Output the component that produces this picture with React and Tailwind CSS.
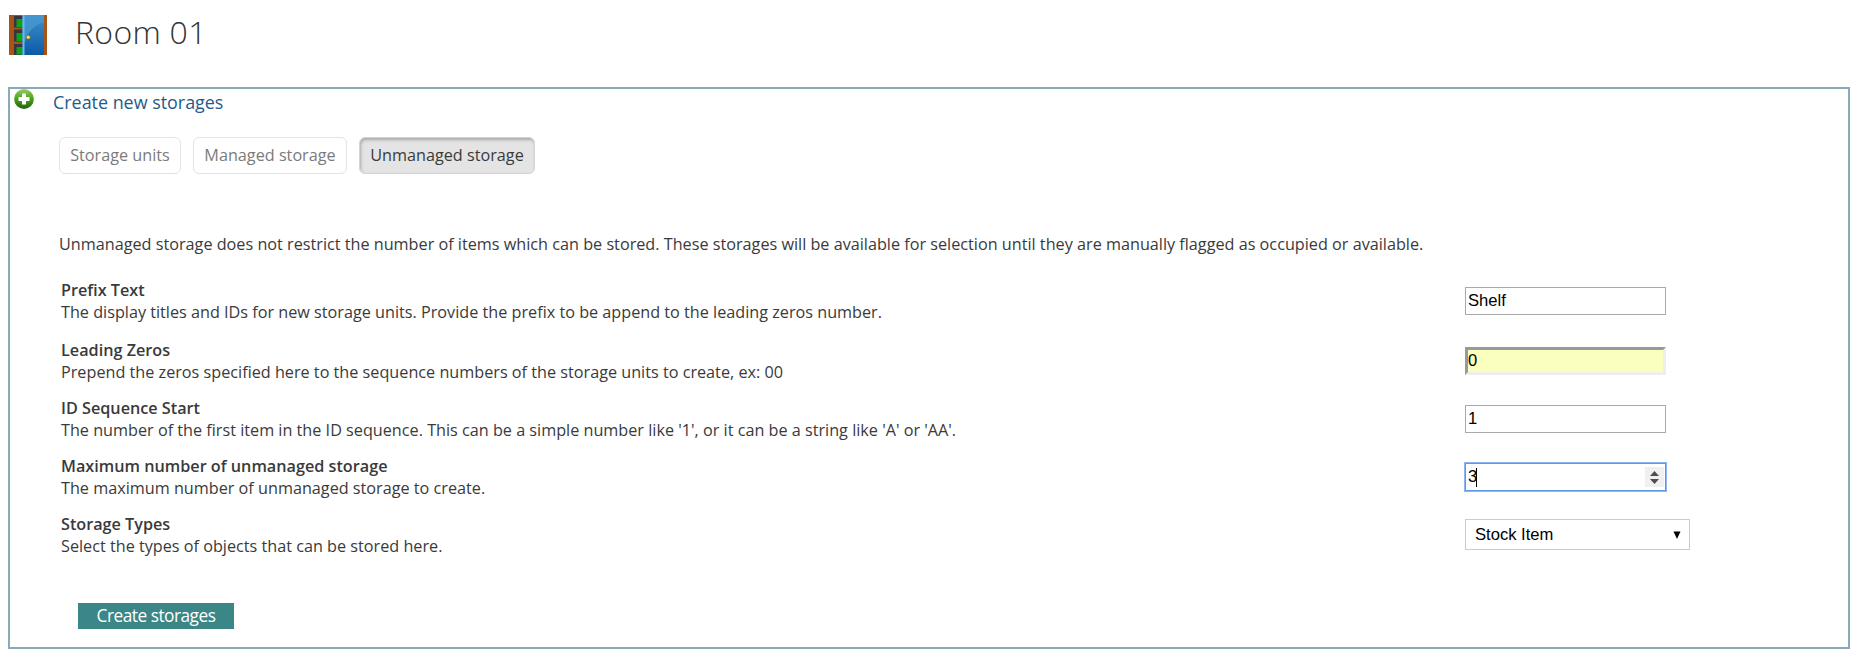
import React from "react";

const rows = [
  { title: "Prefix Text", text: "The display titles and IDs for new storage units. Provide the prefix to be append to the leading zeros number.", kind: "text", value: "Shelf", h: "h-[60px]" },
  { title: "Leading Zeros", text: "Prepend the zeros specified here to the sequence numbers of the storage units to create, ex: 00", kind: "inset", value: "0", h: "h-[58px]" },
  { title: "ID Sequence Start", text: "The number of the first item in the ID sequence. This can be a simple number like '1', or it can be a string like 'A' or 'AA'.", kind: "text", value: "1", h: "h-[58px]" },
  { title: "Maximum number of unmanaged storage", text: "The maximum number of unmanaged storage to create.", kind: "number", value: "3", h: "h-[58px]" },
  { title: "Storage Types", text: "Select the types of objects that can be stored here.", kind: "select", value: "Stock Item", h: "h-[58px]" },
];

function RoomIcon() {
  return (
    <svg width="38" height="40" viewBox="0 0 38 40" className="shrink-0">
      <defs>
        <linearGradient id="door" x1="0" y1="0" x2="0" y2="1">
          <stop offset="0" stopColor="#3f8fcb" />
          <stop offset="1" stopColor="#0a5ba6" />
        </linearGradient>
        <linearGradient id="shine" x1="0" y1="0" x2="0" y2="1">
          <stop offset="0" stopColor="#4596cf" />
          <stop offset="1" stopColor="#3b8fcb" />
        </linearGradient>
      </defs>
      <rect width="38" height="40" fill="#a85417" />
      <path d="M5 1h9v11.500H5zM5 14.500h9v12H5zM5 29h9v11H5z" fill="#3a3340" />
      <path d="M7.500 4H14v8H7.500zM7.500 18H14v8H7.500zM7.500 32H14v7.500H7.500z" fill="#0aa414" />
      <rect x="13.500" width="21.500" height="40" fill="url(#door)" />
      <path d="M15 0H35V7.500Q20 11 16 27H15z" fill="url(#shine)" />
      <rect x="13.500" width="2" height="40" fill="#6cbae6" />
      <circle cx="19.500" cy="22.500" r="2.300" fill="#6b6a2a" />
      <circle cx="19.300" cy="22.200" r="1.700" fill="#f4dc3c" />
    </svg>
  );
}

function AddIcon() {
  return (
    <svg width="20" height="20" viewBox="0 0 20 20" className="shrink-0">
      <defs>
        <linearGradient id="add" x1="0" y1="0" x2="0" y2="1">
          <stop offset="0" stopColor="#9ccb6a" />
          <stop offset="0.450" stopColor="#4fa51f" />
          <stop offset="1" stopColor="#22620f" />
        </linearGradient>
      </defs>
      <circle cx="10" cy="10" r="9.900" fill="url(#add)" />
      <path d="M8.500 4.500h3a.5.5 0 0 1 .5.5v3h3a.5.5 0 0 1 .5.5v3a.5.5 0 0 1-.5.5h-3v3a.5.5 0 0 1-.5.5h-3a.5.5 0 0 1-.5-.5v-3H5a.5.5 0 0 1-.5-.5v-3A.5.5 0 0 1 5 8h3V5a.5.5 0 0 1 .5-.5z" fill="#fff" />
    </svg>
  );
}

function Control({ kind, value }) {
  if (kind === "inset")
    return <div className="mt-2 h-7 w-[201px] border-[3px] border-t-[#999] border-r-[#eee] border-b-[#eee] border-l-[#999] bg-[#faffbd] leading-[21px]">{value}</div>;
  if (kind === "number")
    return (
      <div className="mt-2 flex h-7 w-[201px] items-center border border-[#5e96e6] pr-px pl-0.5 ring-1 ring-[#8db6f5]">
        <span className="leading-[26px]">{value}</span>
        <span className="-ml-px h-[19px] w-px bg-black" />
        <svg width="19" height="20" viewBox="0 0 19 20" className="ml-auto">
          <rect width="19" height="20" fill="#f0f0f0" />
          <path d="M5 9L9.500 4L14 9zM5 12L9.500 17L14 12z" fill="#4f4f4f" />
        </svg>
      </div>
    );
  if (kind === "select")
    return (
      <div className="mt-1.5 flex h-[31px] w-[225px] items-center justify-between border border-[#ccc] pr-2 pl-[9px]">
        <span className="leading-[28px]">{value}</span>
        <svg width="8" height="8" viewBox="0 0 8 8"><path d="M0.500 0.500H7.500L4 8z" fill="#000" /></svg>
      </div>
    );
  return <div className="mt-2 h-7 w-[201px] border border-[#a9a9a9] pl-0.5 leading-[25px]">{value}</div>;
}

export default function App() {
  return (
    <div className="h-[654px] w-[1860px] overflow-hidden bg-white font-['Open_Sans',sans-serif] text-[16.220px] text-[#3a3a3a]">
      <header className="flex h-[87px] items-start pt-[15px] pl-[9px]">
        <RoomIcon />
        <h1 className="-mt-[5px] ml-[28px] text-[32px] leading-[44px] font-light tracking-[0.300px] text-[#333]">Room 01</h1>
      </header>
      <section className="ml-2 h-[562px] w-[1842px] border-2 border-[#8aaab8]">
        <div className="flex h-12 items-start pl-1">
          <AddIcon />
          <h2 className="ml-[19px] text-[17.900px] leading-[26px] text-[#1f5a8b]">Create new storages</h2>
        </div>
        <div className="flex gap-3 pl-[49px] leading-[35px] text-[#7b7b7b]">
          <div className="h-[37px] w-[122px] rounded-md border border-[#e3e3e3] text-center">Storage units</div>
          <div className="h-[37px] w-[154px] rounded-md border border-[#e3e3e3] text-center">Managed storage</div>
          <div className="h-[37px] w-[176px] rounded-md border border-[#d4d4d4] bg-[#e4e4e4] text-center text-[#3a3a3a] shadow-[inset_1px_2px_3px_#aaa]">Unmanaged storage</div>
        </div>
        <p className="mt-[59px] h-[46px] pl-[49px] leading-[22px]">Unmanaged storage does not restrict the number of items which can be stored. These storages will be available for selection until they are manually flagged as occupied or available.</p>
        {rows.map((r) => (
          <div key={r.title} className={`flex pl-[51px] ${r.h}`}>
            <div className="w-[1404px] leading-[22px]">
              <div className="font-semibold">{r.title}</div>
              <div>{r.text}</div>
            </div>
            <div className="font-['Liberation_Sans',sans-serif] text-[16.600px] text-black">
              <Control kind={r.kind} value={r.value} />
            </div>
          </div>
        ))}
        <div className="mt-8 ml-[68px] h-[26px] w-[156px] bg-[#3b8686] text-center text-[17.300px] leading-[25px] tracking-[-0.500px] text-white">Create storages</div>
      </section>
    </div>
  );
}
